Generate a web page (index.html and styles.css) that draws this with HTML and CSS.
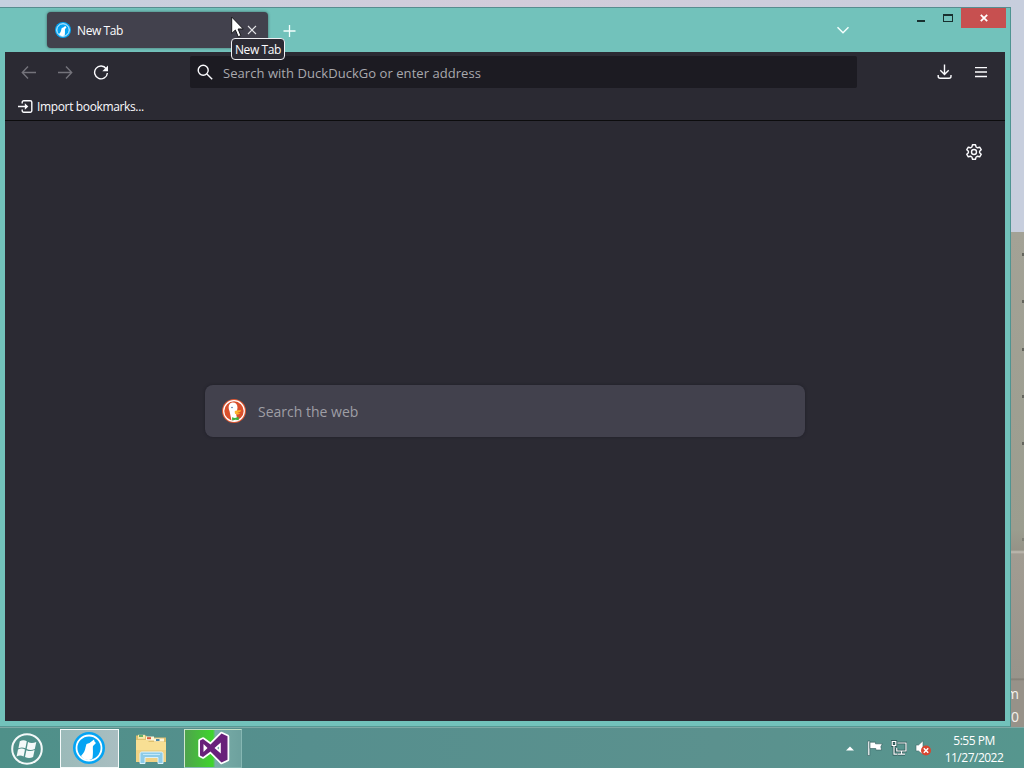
FILE: index.html
```html
<!DOCTYPE html>
<html lang="en">
<head>
    <meta charset="UTF-8">
    <meta name="viewport" content="width=device-width, initial-scale=1.0">
    <title>New Tab</title>
    <link rel="stylesheet" href="styles.css">
</head>
<body>
    <svg width="0" height="0" class="defs">
        <symbol id="wolf" viewBox="0 0 32 32">
            <circle cx="16" cy="16" r="16" fill="#05a4f3"/>
            <circle cx="16" cy="16" r="12.500" fill="none" stroke="#fff" stroke-width="1.800"/>
            <path d="M8 24C11 21 12 18.500 12.500 15.500L13.500 12 16.500 11 21 7.500 21.500 9.500 23 11 20 14C19.500 17 20.500 19 19.500 26.500L16 28C12.500 28 10 27 8 24Z" fill="#fff"/>
        </symbol>
    </svg>
    <main class="desktop">
        <div class="wallpaper">
            <div class="sky"></div>
            <div class="wall">
                <span class="mark m1"></span><span class="mark m2"></span><span class="mark m3"></span>
                <span class="mark m4"></span><span class="mark m5"></span><span class="mark m6"></span>
                <div class="watermark">m<br>0</div>
            </div>
        </div>

        <div class="window">
            <header class="titlebar">
                <div class="tab">
                    <svg class="favicon" width="16" height="16"><use href="#wolf"/></svg>
                    <span class="tab-title">New Tab</span>
                    <svg class="tab-close" width="10" height="10" viewBox="0 0 10 10"><path d="M1 1l8 8M9 1l-8 8"/></svg>
                </div>
                <svg class="new-tab" width="14" height="14" viewBox="0 0 14 14"><path d="M6.500 1v12M.5 7h12"/></svg>
                <svg class="all-tabs" width="14" height="8" viewBox="0 0 14 8"><path d="M1.500 1.200L7 6.700l5.500-5.500"/></svg>
                <div class="controls">
                    <span class="minimize"></span>
                    <span class="maximize"></span>
                    <span class="close"><svg width="8" height="8" viewBox="0 0 8 8"><path d="M.8 .8l6.400 6.400M7.200 .8L.8 7.200"/></svg></span>
                </div>
            </header>

            <div class="client">
                <nav class="toolbar">
                    <svg class="nav-icon off" width="16" height="16" viewBox="0 0 16 16"><path d="M15 8.500H1.500M7 2.500L1.300 8.500 7 14.500"/></svg>
                    <svg class="nav-icon off" width="16" height="16" viewBox="0 0 16 16"><path d="M1 8.500h13.500M9 2.500l5.700 6L9 14.500"/></svg>
                    <svg class="nav-icon reload" width="16" height="16" viewBox="0 0 16 16"><path d="M13.300 4.800A6.400 6.400 0 1 0 14.400 9"/><path d="M15 1.500v5.800H9.300z" class="solid"/></svg>
                    <div class="urlbar">
                        <svg width="16" height="16" viewBox="0 0 16 16"><circle cx="6.200" cy="6.200" r="5"/><path d="M9.900 9.900l5.300 5.300"/></svg>
                        <span>Search with DuckDuckGo or enter address</span>
                    </div>
                    <svg class="downloads" width="16" height="16" viewBox="0 0 16 16"><path d="M7.500 .5v9.500M3.300 6.200l4.200 4.200 4.200-4.200M1.200 11v1.300a2 2 0 0 0 2 2h8.800a2 2 0 0 0 2-2v-1.300"/></svg>
                    <svg class="menu" width="12" height="11" viewBox="0 0 12 11"><path d="M0 .5h12M0 5h12M0 9.500h12"/></svg>
                </nav>
                <div class="bookmarks">
                    <svg width="15" height="13" viewBox="0 0 15 13"><path d="M4.200 3.500V2.200a1.500 1.500 0 0 1 1.500-1.500h6.600a1.500 1.500 0 0 1 1.500 1.500v8.600a1.500 1.500 0 0 1-1.500 1.500H5.700a1.500 1.500 0 0 1-1.500-1.500V9.500M0 6.500h9"/><path d="M6.800 3.200L10.300 6.500 6.800 9.800z" class="solid"/></svg>
                    <span>Import bookmarks...</span>
                </div>
                <section class="page">
                    <svg class="settings" width="16" height="16" viewBox="0 0 16 16">
                        <path d="M6.500 .8h3l.6 2.200 1.400.8 2.200-.6 1.500 2.500L13.600 7.300v1.400l1.600 1.600-1.500 2.500-2.200-.6-1.400.8-.6 2.200h-3L5.900 13l-1.400-.8-2.200.6L.8 10.300 2.400 8.700V7.300L.8 5.700l1.500-2.500 2.200.6L5.900 3z"/>
                        <circle cx="8" cy="8" r="2.500"/>
                    </svg>
                    <div class="search">
                        <svg width="24" height="24" viewBox="0 0 24 24">
                            <circle cx="12" cy="12" r="12" fill="#de5833"/>
                            <circle cx="12" cy="12" r="10.300" fill="#d9502c" stroke="#fff" stroke-width="1.200"/>
                            <path d="M9.500 21.500L7.500 12C6.300 9.500 6 5 9.500 3.800c3.500-.8 5.900 1.200 6 4.700l-.4 3c-1 2-.9 3.500-.7 5l1.300 5c-2 .6-4.200.6-6.200 0z" fill="#fff"/>
                            <path d="M12.800 12c1.500-.8 4-1 6.500-.6-.8 1.600-2.500 2-4 2.500l3 .3c-1.500 1.500-5 1.800-5.500-.2z" fill="#fdb42c"/>
                            <circle cx="10" cy="8.500" r=".7" fill="#2d4f8e"/>
                            <path d="M10 18.300l3 .8 3.500-1.300.3 3.400-3.300-.4-3.300.6z" fill="#3fb33f"/>
                        </svg>
                        <span>Search the web</span>
                    </div>
                </section>
            </div>
        </div>

        <div class="tooltip">New Tab</div>
        <svg class="cursor" width="13" height="22" viewBox="0 0 13 22"><path d="M.7 1v16.500l3.700-3.500 2.800 6.800 2.700-1.100-2.800-6.700h5.200z"/></svg>

        <footer class="taskbar">
            <svg class="start" width="32" height="32" viewBox="0 0 32 32">
                <circle cx="16" cy="16" r="14.800" fill="none" stroke="#f4f9f9" stroke-width="2"/>
                <path d="M8.800 8.200c2.500-1.300 4.800-1.300 7 0l-1.400 7.100c-2.300-1.200-4.500-1.200-7 0zM17 9c2.500 1.200 5.200 1.200 8.300-.1l-1.500 7c-2.700 1.300-5.400 1.300-8.100.1zM7 16.500c2.400-1.200 4.700-1.200 7 0l-1.400 7c-2.400-1.200-4.600-1.200-7 0zM15.400 17.200c2.600 1.200 5.300 1.200 8.200-.1l-1.500 7c-2.600 1.200-5.400 1.200-8.100 0z" fill="#f4f9f9"/>
            </svg>
            <div class="task active"><svg width="32" height="32"><use href="#wolf"/></svg></div>
            <svg class="explorer" width="32" height="30" viewBox="0 0 32 30">
                <path d="M1 1.500h10l2 2h18V27H1z" fill="#dfc06e"/>
                <path d="M3 .8h7v4H3z" fill="#f7e9ac"/><path d="M4 1.200h4v1.600H4z" fill="#3fa35a"/>
                <path d="M11 2.500h8v4h-8z" fill="#fff6d8"/><path d="M12 3.200h4v2h-4z" fill="#d65a3c"/>
                <path d="M19 4.500h10v3H19z" fill="#fff6d8"/><path d="M21 5h3.500v2H21z" fill="#4c88a8"/>
                <path d="M1 6h11l2 2h17v20H1z" fill="#f8df94"/>
                <path d="M1 16h30v12H1z" fill="#f0d284"/>
                <path d="M5 29.500V20c0-1.500 1-2 2-2h19c1.500 0 2 .5 2 2v9.500h-5v-6H10v6z" fill="#8dcbe8" stroke="#d9f1fb"/>
                <path d="M8 20.500h17" stroke="#c4e8f8"/>
            </svg>
            <div class="task vs">
                <svg width="34" height="34" viewBox="0 0 34 34">
                    <path d="M25.500 2.500l6 2.800v23.400l-6 2.800L14.500 20.500 7 26 4 24.500v-15L7 8l7.500 5.500zM24.800 11.500L18.500 17l6.300 5.500zM7.500 13v8l4-4z" fill="#68217a" fill-rule="evenodd" stroke="#fff" stroke-width="3.500" stroke-linejoin="round" paint-order="stroke"/>
                </svg>
            </div>
            <div class="tray">
                <svg width="8" height="5" viewBox="0 0 8 5"><path d="M0 4.500L4 .5l4 4z" fill="#fff"/></svg>
                <svg class="flag" width="16" height="16" viewBox="0 0 16 16"><path d="M.8 1h2v14.500h-2z" fill="#fff" stroke="#31595a" stroke-width=".6"/><path d="M3 2.200h5.500v1.600h6.800l-1.500 3 .8 3.200H8.800V8.500H3z" fill="#fff" stroke="#31595a" stroke-width=".6"/></svg>
                <svg class="network" width="16" height="16" viewBox="0 0 16 16"><path class="edge" d="M6.500 3H15v8H5.800V8M10.500 11v3M7 14.200h7M3 6v8.200h3.500M1.200 1.500h3.600v4H1.200z"/><path class="line" d="M6.500 3H15v8H5.800V8M10.500 11v3M7 14.200h7M3 6v8.200h3.500M1.200 1.500h3.600v4H1.200z"/></svg>
                <svg class="volume" width="17" height="16" viewBox="0 0 17 16"><path d="M1 5h2.500L8 .8v14L3.500 11H1z" fill="#fff" stroke="#426a6a" stroke-width=".6"/><circle cx="11" cy="10.500" r="5" fill="#d8452f"/><path d="M8.800 8.300l4.400 4.400M13.200 8.300l-4.400 4.400" stroke="#fff" stroke-width="1.500"/></svg>
                <div class="clock"><span class="time">5:55 PM</span><span class="date">11/27/2022</span></div>
            </div>
        </footer>
    </main>
</body>
</html>
```

FILE: styles.css
```css
body {
    font-family: 'Open Sans', 'Noto Sans', sans-serif;
    font-size: 12px;
    margin: 0;
    overflow: hidden;
}

svg {
    display: block;
    flex: none;
}

.defs {
    position: absolute;
}

.desktop {
    position: relative;
    width: 1024px;
    height: 768px;
    display: flex;
    flex-direction: column;
    overflow: hidden;
}

/* wallpaper */
.wallpaper {
    flex: 1;
    display: flex;
    flex-direction: column;
}

.sky {
    height: 232px;
    background: linear-gradient(90deg, #c5d0df, #d3ccda 50%, #c7cedd);
}

.wall {
    position: relative;
    flex: 1;
    background: linear-gradient(#a3a296, #9b9d8f 60%, #959387 318px, #c0bcb3 320px, #a19c92 322px, #98948b 446px, #817d74 447px, #979289 449px);
}

.mark {
    position: absolute;
    right: 0;
    width: 2px;
    height: 3px;
    background: #64655d;
}

.m1 { top: 21px; }
.m2 { top: 68px; }
.m3 { top: 116px; }
.m4 { top: 163px; }
.m5 { top: 210px; }
.m6 { top: 306px; opacity: 0.5; }

.watermark {
    position: absolute;
    right: 5px;
    top: 450px;
    font-size: 14px;
    line-height: 23px;
    text-align: right;
    color: #f3f1ec;
}

/* browser window */
.window {
    position: absolute;
    left: 0;
    top: 7px;
    width: 1011px;
    height: 720px;
    box-sizing: border-box;
    display: flex;
    flex-direction: column;
    padding: 0 5px 5px;
    background: #72c2bb;
    border-top: 1px solid #578d90;
    border-right: 1px solid #4f9491;
    border-bottom: 1px solid #579894;
}

.titlebar {
    display: flex;
    align-items: flex-start;
    height: 44px;
}

.tab {
    display: flex;
    align-items: center;
    box-sizing: border-box;
    width: 221px;
    height: 36px;
    margin: 4px 0 0 42px;
    padding: 0 11px 0 8px;
    border-radius: 4px;
    background: #42414d;
    box-shadow: 0 0 3px rgba(0, 0, 0, 0.45);
    color: #fbfbfe;
}

.tab-title {
    margin-left: 6px;
    flex: 1;
    letter-spacing: -0.4px;
}

.tab-close {
    fill: none;
    stroke: #e4e4e8;
    stroke-width: 1.1;
}

.new-tab {
    margin: 16px 0 0 15px;
    fill: none;
    stroke: #f4fffd;
    stroke-width: 1.3;
}

.all-tabs {
    margin: 18px 0 0 auto;
    fill: none;
    stroke: #f4fffd;
    stroke-width: 1.5;
}

.controls {
    display: flex;
    margin-left: 66px;
    margin-right: -1px;
}

.minimize {
    width: 8px;
    height: 2px;
    margin: 12px 0 0 1px;
    background: #18302f;
}

.maximize {
    box-sizing: border-box;
    width: 10px;
    height: 8px;
    margin: 6px 8px 0 18px;
    border: 1px solid #18302f;
    border-top-width: 2px;
}

.close {
    display: flex;
    align-items: center;
    justify-content: center;
    width: 45px;
    height: 20px;
    background: #c75050;
}

.close path {
    stroke: #fff;
    stroke-width: 1.8;
}

.client {
    flex: 1;
    display: flex;
    flex-direction: column;
    background: #2b2a33;
}

.toolbar {
    display: flex;
    align-items: center;
    height: 40px;
    padding: 0 18px 0 16px;
}

.toolbar svg,
.bookmarks svg,
.settings {
    fill: none;
    stroke: #fbfbfe;
    stroke-width: 1.4;
}

.toolbar .solid,
.bookmarks .solid {
    fill: #fbfbfe;
    stroke: none;
}

.nav-icon {
    margin-right: 20px;
}

.toolbar .off {
    stroke: #74737b;
}

.urlbar {
    display: flex;
    align-items: center;
    box-sizing: border-box;
    width: 667px;
    height: 32px;
    margin-left: 61px;
    padding-left: 7px;
    border-radius: 2px;
    background: #1c1b22;
    color: #a9a9ae;
    font-size: 13px;
    letter-spacing: 0.05px;
}

.urlbar span {
    margin: 1px 0 0 10px;
}

.downloads {
    margin-left: auto;
}

.menu {
    margin-left: 22px;
}

.bookmarks {
    display: flex;
    align-items: center;
    height: 28px;
    padding-left: 13px;
    border-bottom: 1px solid #0c0c0d;
    color: #fbfbfe;
    letter-spacing: -0.36px;
}

.bookmarks span {
    margin: 1px 0 0 4px;
}

.page {
    flex: 1;
    display: flex;
    flex-direction: column;
    align-items: center;
}

.settings {
    align-self: flex-end;
    margin: 23px 23px 0 0;
    stroke-linejoin: round;
}

.search {
    display: flex;
    align-items: center;
    box-sizing: border-box;
    width: 600px;
    height: 52px;
    margin-top: 225px;
    padding-left: 17px;
    border-radius: 8px;
    background: #42414d;
    box-shadow: 0 0 3px rgba(20, 20, 28, 0.5);
    color: #9f9ea5;
    font-size: 14px;
}

.search span {
    margin: 1px 0 0 12px;
}

/* over the window */
.tooltip {
    position: absolute;
    left: 231px;
    top: 38px;
    box-sizing: border-box;
    width: 54px;
    height: 22px;
    border: 1px solid #f0f0f4;
    border-radius: 4px;
    background: #2b2a33;
    color: #fbfbfe;
    line-height: 21px;
    letter-spacing: -0.4px;
    text-align: center;
    white-space: nowrap;
}

.cursor {
    position: absolute;
    left: 231px;
    top: 16px;
    fill: #fff;
    stroke: #17171b;
    stroke-width: 1;
}

/* taskbar */
.taskbar {
    display: flex;
    align-items: center;
    box-sizing: border-box;
    height: 41px;
    padding-left: 11px;
    border-top: 1px solid #7eaaa6;
    background: linear-gradient(90deg, #4f9089, #568f8e 30%, #5b918e 70%, #56968e);
}

.start {
    margin-top: 2px;
}

.task {
    display: flex;
    align-items: center;
    justify-content: center;
    box-sizing: border-box;
    width: 59px;
    height: 39px;
    border: 1px solid #86b7b3;
}

.active {
    margin-left: 17px;
    padding-right: 2px;
    border-color: #f4f9f9;
    background: linear-gradient(90deg, #9bbab9, #a9bec1);
}

.explorer {
    margin: 2px 0 0 16px;
}

.vs {
    margin-left: 17px;
    width: 58px;
    border-left-color: #d1e8cf;
    border-top-color: #c1dfc7;
    background: linear-gradient(90deg, #4fa34d, #3ed52c 50%, #79ada8 54%, #6da19e);
}

.tray {
    display: flex;
    align-items: center;
    margin-left: auto;
    padding-right: 20px;
    color: #fff;
}

.flag {
    margin-left: 13px;
}

.network {
    margin-left: 8px;
    fill: none;
}

.edge {
    stroke: #284f50;
    stroke-width: 2.6;
}

.line {
    stroke: #fff;
    stroke-width: 1.2;
}

.volume {
    margin-left: 8px;
}

.clock {
    display: flex;
    flex-direction: column;
    align-items: center;
    width: 60px;
    margin-left: 12px;
    padding-top: 1px;
    line-height: 17px;
    letter-spacing: -0.5px;
    white-space: nowrap;
}
```
